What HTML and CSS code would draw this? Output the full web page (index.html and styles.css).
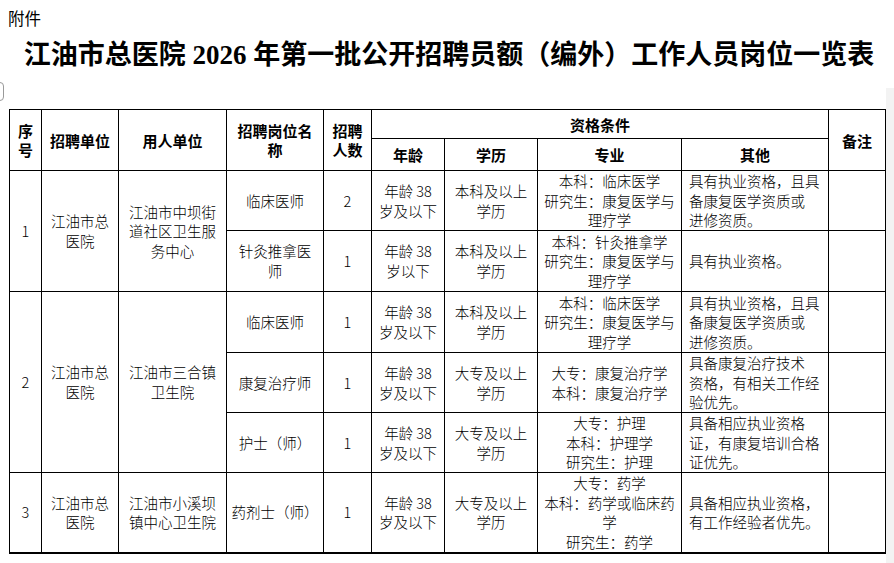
FILE: index.html
```html
<!DOCTYPE html>
<html lang="zh-CN">
<head>
<meta charset="utf-8">
<title>岗位一览表</title>
<link rel="stylesheet" href="styles.css">
</head>
<body>
<div class="page">
  <div class="main">
    <div class="att">附件</div>
    <h1 class="title">江油市总医院 2026 年第一批公开招聘员额（编外）工作人员岗位一览表</h1>
    <div class="tab-edge"></div>
    <table class="grid">
      <colgroup>
        <col class="c1"><col class="c2"><col class="c3"><col class="c4"><col class="c5">
        <col class="c6"><col class="c7"><col class="c8"><col class="c9"><col class="c10">
      </colgroup>
      <thead>
        <tr class="h1">
          <th rowspan="2">序<br>号</th>
          <th rowspan="2">招聘单位</th>
          <th rowspan="2">用人单位</th>
          <th rowspan="2">招聘岗位名<br>称</th>
          <th rowspan="2">招聘<br>人数</th>
          <th colspan="4">资格条件</th>
          <th rowspan="2">备注</th>
        </tr>
        <tr class="h2">
          <th>年龄</th>
          <th>学历</th>
          <th>专业</th>
          <th>其他</th>
        </tr>
      </thead>
      <tbody>
        <tr class="r60">
          <td rowspan="2">1</td>
          <td rowspan="2">江油市总<br>医院</td>
          <td rowspan="2">江油市中坝街<br>道社区卫生服<br>务中心</td>
          <td>临床医师</td>
          <td>2</td>
          <td>年龄 38<br>岁及以下</td>
          <td>本科及以上<br>学历</td>
          <td>本科：临床医学<br>研究生：康复医学与<br>理疗学</td>
          <td class="left">具有执业资格，且具<br>备康复医学资质或<br>进修资质。</td>
          <td></td>
        </tr>
        <tr class="r61">
          <td>针灸推拿医<br>师</td>
          <td>1</td>
          <td>年龄 38<br>岁以下</td>
          <td>本科及以上<br>学历</td>
          <td>本科：针灸推拿学<br>研究生：康复医学与<br>理疗学</td>
          <td class="left">具有执业资格。</td>
          <td></td>
        </tr>
        <tr class="r61">
          <td rowspan="3">2</td>
          <td rowspan="3">江油市总<br>医院</td>
          <td rowspan="3">江油市三合镇<br>卫生院</td>
          <td>临床医师</td>
          <td>1</td>
          <td>年龄 38<br>岁及以下</td>
          <td>本科及以上<br>学历</td>
          <td>本科：临床医学<br>研究生：康复医学与<br>理疗学</td>
          <td class="left">具有执业资格，且具<br>备康复医学资质或<br>进修资质。</td>
          <td></td>
        </tr>
        <tr class="r60">
          <td>康复治疗师</td>
          <td>1</td>
          <td>年龄 38<br>岁及以下</td>
          <td>大专及以上<br>学历</td>
          <td>大专：康复治疗学<br>本科：康复治疗学</td>
          <td class="left">具备康复治疗技术<br>资格，有相关工作经<br>验优先。</td>
          <td></td>
        </tr>
        <tr class="r60">
          <td>护士（师）</td>
          <td>1</td>
          <td>年龄 38<br>岁及以下</td>
          <td>大专及以上<br>学历</td>
          <td>大专：护理<br>本科：护理学<br>研究生：护理</td>
          <td class="left">具备相应执业资格<br>证，有康复培训合格<br>证优先。</td>
          <td></td>
        </tr>
        <tr class="r81">
          <td>3</td>
          <td>江油市总<br>医院</td>
          <td>江油市小溪坝<br>镇中心卫生院</td>
          <td>药剂士（师）</td>
          <td>1</td>
          <td>年龄 38<br>岁及以下</td>
          <td>大专及以上<br>学历</td>
          <td>大专：药学<br>本科：药学或临床药<br>学<br>研究生：药学</td>
          <td class="left">具备相应执业资格，<br>有工作经验者优先。</td>
          <td></td>
        </tr>
      </tbody>
    </table>
  </div>
  <div class="strip"></div>
</div>
</body>
</html>
```

FILE: styles.css
```css
html, body {
  margin: 0;
  padding: 0;
  background: #ffffff;
}

body {
  font-family: "Noto Sans CJK SC", "Liberation Sans", sans-serif;
  color: #000;
}

.page {
  display: flex;
  width: 894px;
  height: 563px;
  overflow: hidden;
}

.main {
  width: 886px;
  flex: none;
}

.strip {
  flex: 1;
  margin-top: 88px;
  background: #f3f3f3;
}

.att {
  margin-top: 7px;
  padding-left: 8px;
  font-size: 16.5px;
  line-height: 22px;
}

.title {
  margin: 9px 0 0 0;
  padding-left: 12px;
  font-family: "Liberation Serif", "Noto Sans CJK SC", serif;
  font-weight: 700;
  font-size: 27px;
  line-height: 34px;
  text-align: center;
  white-space: nowrap;
}

.tab-edge {
  margin-top: 10px;
  margin-left: -4px;
  width: 6px;
  height: 17px;
  border: 1px solid #9a9a9a;
  border-radius: 0 4px 4px 0;
}

.grid {
  margin-top: 8px;
  margin-left: 9px;
  width: 876px;
  table-layout: fixed;
  border-collapse: collapse;
  border-bottom: 2px solid #000;
  font-size: 14.5px;
  font-weight: 300;
  line-height: 19.6px;
}

.c1 { width: 32px; }
.c2 { width: 77px; }
.c3 { width: 108px; }
.c4 { width: 97px; }
.c5 { width: 48px; }
.c6 { width: 73px; }
.c7 { width: 93px; }
.c8 { width: 144px; }
.c9 { width: 147px; }
.c10 { width: 57px; }

.grid th,
.grid td {
  border: 1px solid #000;
  padding: 0;
  text-align: center;
  vertical-align: middle;
  white-space: nowrap;
  overflow: hidden;
}

.grid th {
  font-size: 15px;
  font-weight: 700;
  line-height: 19px;
}

.grid td.left {
  text-align: left;
  padding-left: 7px;
}

.h1 { height: 29px; }
.h2 { height: 32px; }
.r60 { height: 60px; }
.r61 { height: 61px; }
.r81 { height: 80px; }
```
